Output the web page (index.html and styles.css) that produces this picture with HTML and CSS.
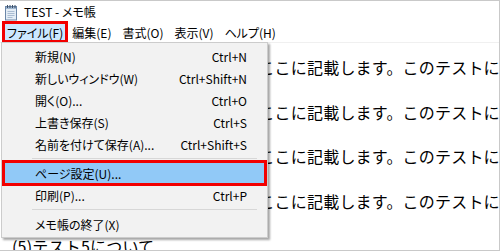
FILE: index.html
```html
<!DOCTYPE html>
<html lang="ja">
<head>
    <meta charset="UTF-8">
    <title>TEST - メモ帳</title>
    <link rel="stylesheet" href="styles.css">
</head>
<body>
    <div class="window">
        <div class="titlebar">
            <svg class="app-icon" width="16" height="18" viewBox="0 0 16 18">
                <rect x="2.5" y="3.5" width="11" height="13.5" fill="#e4edf6" stroke="#6a86a8"/>
                <rect x="3" y="4" width="10" height="2" fill="#9fb6d0"/>
                <path d="M4.5 2v3M7 2v3M9.5 2v3M12 2v3" stroke="#3d4f66" stroke-width="1"/>
                <path d="M4.5 8.5h7M4.5 10.5h7M4.5 12.5h7M4.5 14.5h5" stroke="#a9bcd2" stroke-width="1"/>
            </svg>
            <span class="title">TEST - メモ帳</span>
        </div>

        <div class="menubar">
            <span class="menu-item active">ファイル(F)</span>
            <span class="menu-item">編集(E)</span>
            <span class="menu-item">書式(O)</span>
            <span class="menu-item">表示(V)</span>
            <span class="menu-item">ヘルプ(H)</span>
        </div>

        <div class="editor">
            <div class="line">テスト１の詳細な内容については、ここに記載します。このテストについて</div>
            <div class="line heading">(2)テスト2について</div>
            <div class="line">テスト２の詳細な内容については、ここに記載します。このテストについて</div>
            <div class="line heading">(3)テスト3について</div>
            <div class="line">テスト３の詳細な内容については、ここに記載します。このテストについて</div>
            <div class="line heading">(4)テスト4について</div>
            <div class="line">テスト４の詳細な内容については、ここに記載します。このテストについて</div>
            <div class="line">&nbsp;</div>
            <div class="line heading">(5)テスト5について</div>
        </div>

        <!-- file menu dropdown -->
        <div class="dropdown">
            <div class="dd-item"><span>新規(N)</span><span>Ctrl+N</span></div>
            <div class="dd-item"><span>新しいウィンドウ(W)</span><span>Ctrl+Shift+N</span></div>
            <div class="dd-item"><span>開く(O)...</span><span>Ctrl+O</span></div>
            <div class="dd-item"><span>上書き保存(S)</span><span>Ctrl+S</span></div>
            <div class="dd-item"><span>名前を付けて保存(A)...</span><span>Ctrl+Shift+S</span></div>
            <div class="dd-sep"></div>
            <div class="dd-item selected"><span>ページ設定(U)...</span><span></span></div>
            <div class="dd-item"><span>印刷(P)...</span><span>Ctrl+P</span></div>
            <div class="dd-sep"></div>
            <div class="dd-item"><span>メモ帳の終了(X)</span><span></span></div>
        </div>
    </div>
</body>
</html>
```

FILE: styles.css
```css
body {
    margin: 0;
    background: #fff;
    font-family: "Noto Sans", "Noto Sans CJK JP", sans-serif;
}
.window {
    position: relative;
    width: 500px;
    height: 251px;
    box-sizing: border-box;
    border-top: 1px solid #c9c9c9;
    border-right: 1px solid #c9c9c9;
    border-bottom: 1px solid #c9c9c9;
    background: #fff;
    overflow: hidden;
}
.titlebar {
    height: 21px;
    display: flex;
    align-items: center;
    padding-left: 3px;
    font-size: 12px;
    color: #000;
}
.app-icon { margin-right: 5px; }
.title {
    font-family: "Noto Sans CJK JP", sans-serif;
    font-feature-settings: "palt";
}

.menubar {
    display: flex;
    height: 20px;
    padding-left: 3px;
    font-size: 12px;
    font-family: "Noto Sans CJK JP", sans-serif;
    font-feature-settings: "palt";
    border-bottom: 1px solid #f0f0f0;
}
.menu-item {
    display: flex;
    align-items: center;
    padding: 0 6px 0 4px;
    margin-right: 1px;
}
.menu-item.active {
    padding-right: 4px;
    background: #cce8ff;
    outline: 3px solid #f20000;
    outline-offset: -2px;
}

.editor {
    padding-top: 13px;
    font-family: "Noto Sans CJK JP", sans-serif;
    font-size: 16px;
    letter-spacing: 0.2px;
    line-height: 22.35px;
    white-space: nowrap;
    color: #000;
}
.heading { padding-left: 12px; }

.dropdown {
    position: absolute;
    left: 1px;
    top: 41px;
    width: 267px;
    box-sizing: border-box;
    padding: 2px 2px;
    background: #f2f2f2;
    border: 1px solid #cccccc;
    box-shadow: 2px 2px 2px rgba(0,0,0,0.35);
    font-family: "Noto Sans CJK JP", sans-serif;
    font-feature-settings: "palt";
    font-size: 12px;
    color: #000;
}
.dd-item {
    display: flex;
    justify-content: space-between;
    align-items: center;
    height: 22px;
    padding: 0 18px 0 31px;
}
.dd-item.selected {
    background: #91c9f7;
    outline: 3px solid #f20000;
    outline-offset: -1px;
}
.dd-sep {
    height: 7px;
    margin: 0 8px 0 28px;
    position: relative;
}
.dd-sep::after {
    content: "";
    position: absolute;
    left: 0;
    right: 0;
    top: 3px;
    border-top: 1px solid #d7d7d7;
}
```
